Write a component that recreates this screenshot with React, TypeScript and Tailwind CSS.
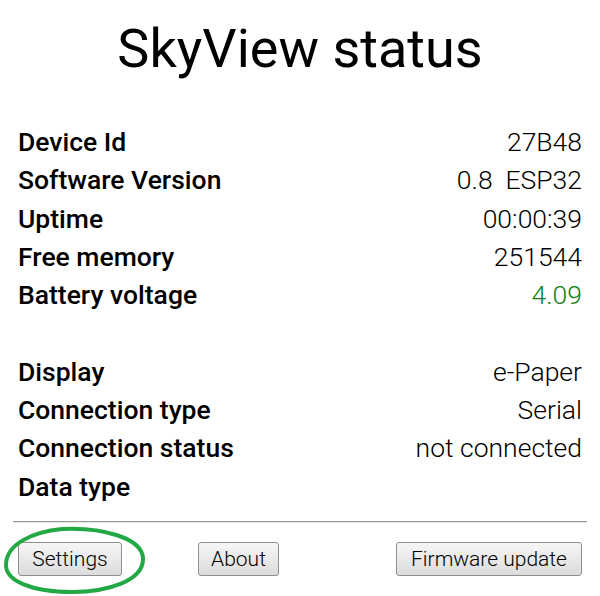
const rows1: [string, string, boolean?][] = [
  ["Device Id", "27B48"],
  ["Software Version", "0.8\u00a0 ESP32"],
  ["Uptime", "00:00:39"],
  ["Free memory", "251544"],
  ["Battery voltage", "4.09", true],
]

const rows2: [string, string][] = [
  ["Display", "e-Paper"],
  ["Connection type", "Serial"],
  ["Connection status", "not connected"],
  ["Data type", ""],
]

function Row({ label, value, green }: { label: string; value: string; green?: boolean }) {
  return (
    <div className="flex h-[38.3px] items-center justify-between text-[26.5px] leading-[38.3px]">
      <span className="font-medium text-black">{label}</span>
      <span className={green ? "font-light text-[#108010]" : "font-light text-black"}>{value}</span>
    </div>
  )
}

function Btn({ children, className = "" }: { children: React.ReactNode; className?: string }) {
  return (
    <button
      className={
        "h-[34px] rounded-[3px] border border-[#8f8f8f] bg-gradient-to-b from-[#f6f6f6] to-[#dcdcdc] text-[21px] leading-[32px] font-light text-black " +
        className
      }
    >
      {children}
    </button>
  )
}

export default function App() {
  return (
    <div className="h-[596px] w-[600px] overflow-hidden bg-white px-[13px] font-['Roboto',sans-serif]">
      <h1 className="pt-[17px] text-center text-[54px] leading-[64px] font-normal text-black">SkyView status</h1>

      <div className="mt-[42px] px-[5px]">
        {rows1.map(([l, v, g]) => (
          <Row key={l} label={l} value={v} green={g} />
        ))}
        <div className="h-[38.3px]" />
        {rows2.map(([l, v]) => (
          <Row key={l} label={l} value={v} />
        ))}
      </div>

      <div className="mt-[15px] border-t border-b border-t-[#9a9a9a] border-b-[#e4e4e4]" />

      <div className="relative mt-[19px] flex items-center px-[5px]">
        <Btn className="w-[104px]">Settings</Btn>
        <Btn className="ml-[76px] w-[81px]">About</Btn>
        <Btn className="ml-auto w-[186px]">Firmware update</Btn>
        <svg
          className="pointer-events-none absolute left-[-11px] top-[-16px]"
          width="146"
          height="70"
          viewBox="0 0 146 70"
        >
          <path
            d="M60 3 C 100 1, 140 12, 141 32 C 142 55, 105 66, 70 66 C 30 66, 3 55, 4 38 C 5 18, 30 6, 60 3 Z"
            fill="none"
            stroke="#22a844"
            strokeWidth="4"
          />
        </svg>
      </div>
    </div>
  )
}
